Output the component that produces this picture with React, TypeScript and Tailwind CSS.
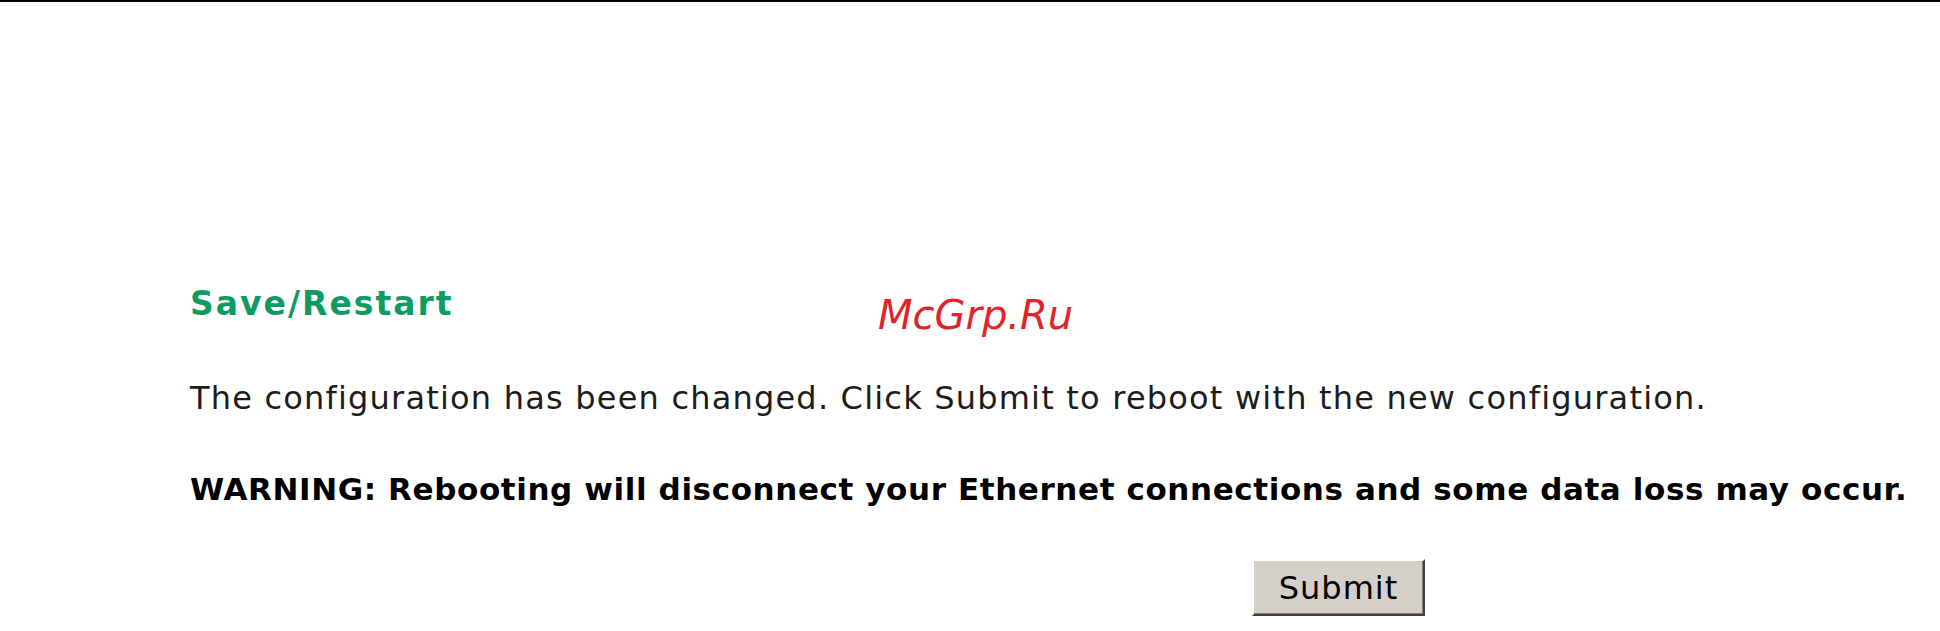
import React from 'react';

const FONT = '"DejaVu Sans", Verdana, sans-serif';

export default function App() {
  return (
    <div className="relative min-h-[631px] w-[1940px] bg-white" style={{ fontFamily: FONT }}>
      {/* top rule */}
      <div className="h-[2px] bg-black" />

      <div className="flex flex-col pl-[190px]">
        <h1 className="mt-[285px] text-[33px] font-bold leading-none tracking-[2px] text-[#0e9a63]">Save/Restart</h1>

        <p className="mt-[62px] text-[32px] leading-none tracking-[1.2px] text-[#1c1c1c]">
          The configuration has been changed. Click Submit to reboot with the new configuration.
        </p>

        <p className="mt-[60px] text-[31px] font-bold leading-none tracking-[0.6px] text-black">
          WARNING: Rebooting will disconnect your Ethernet connections and some data loss may occur.
        </p>

        <div className="mt-[54px] pl-[1062px]">
          <button
            type="button"
            className="h-[57px] w-[173px] border-2 border-t-white border-l-white border-r-[#404040] border-b-[#404040] bg-[#d4d0c8] text-[32px] leading-none tracking-[1px] text-black shadow-[inset_-1px_-1px_0_#808080]"
          >
            Submit
          </button>
        </div>
      </div>

      {/* watermark */}
      <div className="absolute left-[878px] top-[295px] text-[40px] italic leading-none text-[#e0242a]">McGrp.Ru</div>
    </div>
  );
}
